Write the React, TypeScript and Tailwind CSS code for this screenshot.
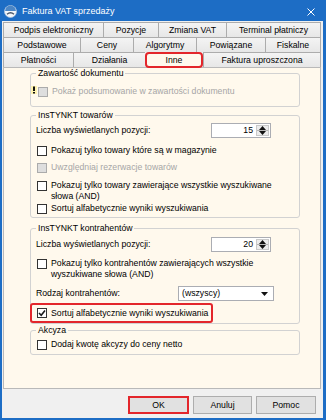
import React from "react";

function AppIcon() {
  return (
    <svg width="13" height="13" viewBox="0 0 13 13" className="shrink-0">
      <circle cx="6.5" cy="6.5" r="6" fill="#f4f7fb" stroke="#a9c1de" strokeWidth="0.8" />
      <path d="M1.1 6 A5.4 5.4 0 0 1 11.9 6 Z" fill="#4b86c6" />
      <path d="M3 9.3 C5 7.6, 8 7.6, 10 9.3" stroke="#4a5668" strokeWidth="1.4" fill="none" />
    </svg>
  );
}

function Checkbox({ checked, disabled }: { checked?: boolean; disabled?: boolean }) {
  return (
    <span
      className={`shrink-0 w-[10px] h-[10px] border flex items-center justify-center ${
        disabled ? "border-[#ababab] bg-[#dedede]" : "border-[#333333] bg-white"
      }`}
    >
      {checked && (
        <svg width="8" height="8" viewBox="0 0 8 8">
          <path d="M1 4 L3.2 6.2 L7 1.6" stroke="#1a1a1a" strokeWidth="1.6" fill="none" />
        </svg>
      )}
    </span>
  );
}

function CheckRow({
  children,
  checked,
  disabled,
  className = "",
}: {
  children: React.ReactNode;
  checked?: boolean;
  disabled?: boolean;
  className?: string;
}) {
  return (
    <div className={`flex items-start gap-[4px] ${className}`}>
      <span className="pt-[0.5px] pl-[1px]">
        <Checkbox checked={checked} disabled={disabled} />
      </span>
      <span className={`leading-[11px] ${disabled ? "text-[#a6a6a6]" : "text-black"}`}>{children}</span>
    </div>
  );
}

function Group({
  title,
  children,
  className = "",
}: {
  title: string;
  children: React.ReactNode;
  className?: string;
}) {
  return (
    <fieldset className={`border border-[#d2d2d2] rounded-[3px] ml-[26px] w-[270px] ${className}`}>
      <legend className="ml-[5px] px-[2px] leading-[10px]">{title}</legend>
      {children}
    </fieldset>
  );
}

function Spinner({ value }: { value: string }) {
  return (
    <div className="w-[60px] h-[15px] border border-[#abadb3] bg-white flex">
      <span className="flex-1 text-right pr-[3px] leading-[13px]">{value}</span>
      <div className="w-[13px] flex flex-col my-[1px] mr-[1px] border border-[#c9c9c9]">
        <div className="flex-1 flex items-center justify-center bg-[#ececec]">
          <svg width="7" height="4" viewBox="0 0 7 4">
            <path d="M0 4 L3.5 0 L7 4Z" fill="#111" />
          </svg>
        </div>
        <div className="h-px bg-[#b5b5b5]" />
        <div className="flex-1 flex items-center justify-center bg-[#ececec]">
          <svg width="7" height="4" viewBox="0 0 7 4">
            <path d="M0 0 L7 0 L3.5 4Z" fill="#111" />
          </svg>
        </div>
      </div>
    </div>
  );
}

type Tab = { label: string; w: string; selected?: boolean; last?: boolean };

function TabRow({ tabs }: { tabs: Tab[] }) {
  return (
    <div className="flex h-[15px]">
      {tabs.map((t) =>
        t.selected ? (
          <div
            key={t.label}
            className={`${t.w} h-[16px] border-2 border-[#e3262b] rounded-[4px] bg-[#fff9ed] flex items-center justify-center leading-none relative z-10`}
          >
            {t.label}
          </div>
        ) : (
          <div
            key={t.label}
            className={`${t.w} h-[15px] border-t border-l ${
              t.last ? "border-r" : ""
            } border-[#acacac] bg-linear-to-b from-[#f4f4f4] to-[#e7e7e7] flex items-center justify-center leading-none`}
          >
            {t.label}
          </div>
        )
      )}
    </div>
  );
}

export default function App() {
  return (
    <div className="w-[326px] h-[420px] bg-[#1d6dc5] flex flex-col font-['Liberation_Sans',Arial,sans-serif] text-[8.7px] text-black overflow-hidden">
      {/* title bar */}
      <div className="h-[21px] shrink-0 flex items-center pl-[4px] pr-[11px] pt-[2px] text-white">
        <AppIcon />
        <span className="ml-[5px] text-[9px] leading-none">Faktura VAT sprzedaży</span>
        <svg className="ml-auto" width="8" height="8" viewBox="0 0 8 8">
          <path d="M0.5 0.5 L7.5 7.5 M7.5 0.5 L0.5 7.5" stroke="white" strokeWidth="1" />
        </svg>
      </div>

      <div className="flex-1 ml-[2px] mr-[3px] mb-[2px] bg-[#f0f0f0] flex flex-col">
        {/* tabs */}
        <div className="pt-[1px] pl-[1px] flex flex-col">
          <TabRow
            tabs={[
              { label: "Podpis elektroniczny", w: "w-[100px]" },
              { label: "Pozycje", w: "w-[55px]" },
              { label: "Zmiana VAT", w: "w-[68px]" },
              { label: "Terminal płatniczy", w: "w-[95px]", last: true },
            ]}
          />
          <TabRow
            tabs={[
              { label: "Podstawowe", w: "w-[77px]" },
              { label: "Ceny", w: "w-[53px]" },
              { label: "Algorytmy", w: "w-[63px]" },
              { label: "Powiązane", w: "w-[69px]" },
              { label: "Fiskalne", w: "w-[56px]", last: true },
            ]}
          />
          <TabRow
            tabs={[
              { label: "Płatności", w: "w-[70px]" },
              { label: "Działania", w: "w-[72px]" },
              { label: "Inne", w: "w-[58px]", selected: true },
              { label: "Faktura uproszczona", w: "w-[118px]", last: true },
            ]}
          />
        </div>

        {/* panel */}
        <div className="ml-[1px] w-[318px] h-[322px] shrink-0 border border-[#b9b9b9] bg-[#fff9ed] flex flex-col">
          <Group title="Zawartość dokumentu">
            <div className="pt-[8px] pb-[9px] flex items-start">
              <svg width="6" height="8" viewBox="0 0 6 8" className="shrink-0 mt-[0px]">
                <rect x="0" y="0" width="6" height="8" fill="#fff3b0" />
                <rect x="2" y="0.5" width="2" height="4.5" fill="#111" />
                <rect x="2" y="6" width="2" height="1.5" fill="#111" />
              </svg>
              <CheckRow disabled>Pokaż podsumowanie w zawartości dokumentu</CheckRow>
            </div>
          </Group>

          <Group title="InsTYNKT towarów" className="mt-[3px]">
            <div className="pl-[5px] pt-[3px] pb-[3px] flex flex-col">
              <div className="flex items-center h-[15px]">
                <span className="w-[175px] leading-[11px]">Liczba wyświetlanych pozycji:</span>
                <Spinner value="15" />
              </div>
              <CheckRow className="mt-[7px]">Pokazuj tylko towary które są w magazynie</CheckRow>
              <CheckRow disabled className="mt-[6px]">
                Uwzględniaj rezerwacje towarów
              </CheckRow>
              <CheckRow className="mt-[7px]">
                Pokazuj tylko towary zawierające wszystkie wyszukiwane
                <br />
                słowa (AND)
              </CheckRow>
              <CheckRow className="mt-[1px]">Sortuj alfabetycznie wyniki wyszukiwania</CheckRow>
            </div>
          </Group>

          <Group title="InsTYNKT kontrahentów" className="mt-[5px]">
            <div className="pl-[5px] pt-[4px] pb-0 flex flex-col">
              <div className="flex items-center h-[15px]">
                <span className="w-[175px] leading-[11px]">Liczba wyświetlanych pozycji:</span>
                <Spinner value="20" />
              </div>
              <CheckRow className="mt-[6px]">
                Pokazuj tylko kontrahentów zawierających wszystkie
                <br />
                wyszukiwane słowa (AND)
              </CheckRow>
              <div className="flex items-center h-[15px] mt-[6px]">
                <span className="w-[142px] leading-[11px]">Rodzaj kontrahentów:</span>
                <div className="w-[96px] h-[15px] border border-[#abadb3] bg-white flex items-center pl-[3px] pr-[5px]">
                  <span className="flex-1 leading-[11px]">(wszyscy)</span>
                  <svg width="7" height="4" viewBox="0 0 7 4">
                    <path d="M0 0 L7 0 L3.5 4Z" fill="#111" />
                  </svg>
                </div>
              </div>
              <div className="mt-[2px] -ml-[6px] self-start h-[20px] border-2 border-[#e3262b] rounded-[3px] flex items-center pl-[4px] pr-[3px]">
                <CheckRow checked>Sortuj alfabetycznie wyniki wyszukiwania</CheckRow>
              </div>
            </div>
          </Group>

          <Group title="Akcyza" className="mt-[1px]">
            <div className="pl-[5px] pt-[4px] pb-[4px]">
              <CheckRow>Dodaj kwotę akcyzy do ceny netto</CheckRow>
            </div>
          </Group>
        </div>

        {/* buttons */}
        <div className="flex-1 flex justify-end items-start pt-[7px] pr-[7px] gap-[4px]">
          <button className="w-[61px] h-[18px] border-2 border-[#e3262b] bg-[#e1e1e1] leading-none">OK</button>
          <button className="w-[59px] h-[18px] border border-[#adadad] bg-[#e1e1e1] leading-none">Anuluj</button>
          <button className="w-[60px] h-[18px] border border-[#adadad] bg-[#e1e1e1] leading-none">Pomoc</button>
        </div>
      </div>
    </div>
  );
}
